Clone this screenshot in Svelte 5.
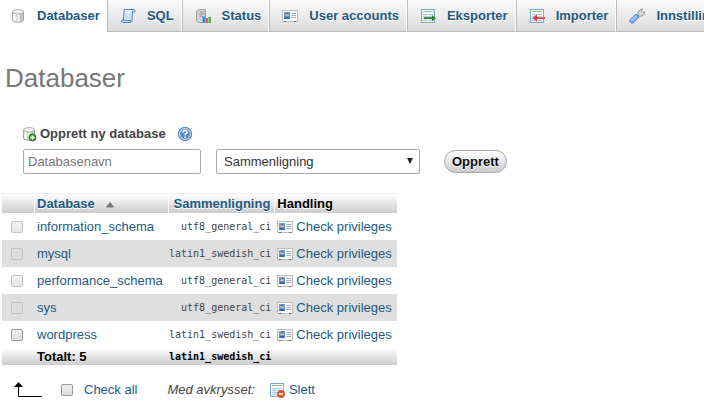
<script>
  const tabs = [
    { label: 'Databaser', icon: 'db', active: true },
    { label: 'SQL', icon: 'sql' },
    { label: 'Status', icon: 'status' },
    { label: 'User accounts', icon: 'rights' },
    { label: 'Eksporter', icon: 'export' },
    { label: 'Importer', icon: 'import' },
    { label: 'Innstillinger', icon: 'settings' }
  ];
  const databases = [
    { name: 'information_schema', collation: 'utf8_general_ci', system: true },
    { name: 'mysql', collation: 'latin1_swedish_ci', system: true },
    { name: 'performance_schema', collation: 'utf8_general_ci', system: true },
    { name: 'sys', collation: 'utf8_general_ci', system: true },
    { name: 'wordpress', collation: 'latin1_swedish_ci', system: false }
  ];
  let selected = $state([]);
  const selectable = databases.filter((d) => !d.system).map((d) => d.name);
  const toggleAll = (e) => (selected = e.currentTarget.checked ? [...selectable] : []);
</script>

{#snippet cylinder()}
  <path d="M2.5 3.8v8.400c0 1 2.400 2 5.500 2s5.500-1 5.500-2V3.800z" fill="#dadada" stroke="#a3a3a3" />
  <path d="M4.500 6v7" stroke="#fff" stroke-width="2" />
  <path d="M8.500 6v7.500" stroke="#efefef" stroke-width="2" />
  <path d="M11.500 6v7" stroke="#bdbdbd" stroke-width="2" />
  <ellipse cx="8" cy="3.800" rx="5.500" ry="2.200" fill="#f4f4f4" stroke="#b0b0b0" />
{/snippet}

{#snippet sheet()}
  <rect x="1.500" y="1.500" width="13" height="13" fill="#f6faff" stroke="#7da5da" />
  <path d="M3 3.500h10" stroke="#8ac878" />
  <path d="M3 6.500h10M3 8.500h10M3 10.500h10M3 12.500h10M5.500 6v7M10.500 6v7" stroke="#b3cae4" />
{/snippet}

{#snippet icon(kind)}
  <svg class="icon" viewBox="0 0 16 16" width="16" height="16" aria-hidden="true">
    {#if kind === 'db'}
      {@render cylinder()}
    {:else if kind === 'dbadd'}
      {@render cylinder()}
      <circle cx="11.500" cy="11.500" r="3.500" fill="#4c9a37" stroke="#2e7222" />
      <path d="M11.500 9.500v4M9.500 11.500h4" stroke="#fff" stroke-width="1.400" />
    {:else if kind === 'sql'}
      <path d="M4.500 1.500H14c1.500 0 1.500 2.500 0 2.500h-1.500l-.5 8.500c0 1.300-.5 2-1.500 2h-8c-1.500 0-1.800-2-.3-2.500H3.500L4 3c0-.8.200-1.300.500-1.500z" fill="#cfe1fa" stroke="#4f85ca" />
      <path d="M5 4.500h5.500M5 3h6.500" stroke="#fff" />
      <path d="M2.500 12.500h8v1.500M12.500 4V2.500" fill="none" stroke="#5d92d7" />
    {:else if kind === 'status'}
      <path d="M1.500 3L5 1.500h5.500v11L8 14.500H4L1.500 13z" fill="#d4d4d4" stroke="#a0a0a0" />
      <path d="M4.500 4h5M4.500 6h5M4.500 8h3" stroke="#999" />
      <path d="M7 8.500h3v6.500H7z" fill="#4385dc" />
      <path d="M10 10h3v5h-3z" fill="#e65a42" />
      <path d="M13 9h3v6h-3z" fill="#5bb454" />
      <path d="M7.500 9v6M10.500 10.500v4.500M13.500 9.500v5.500" stroke="#fff" stroke-opacity=".35" />
    {:else if kind === 'rights'}
      <rect x=".5" y="2.500" width="15" height="11" fill="#fafafa" stroke="#bdbdbd" />
      <path d="M2 4h6v7H2z" fill="#5a9fe8" />
      <path d="M2.500 11V9.500l1.500-1h2l1.500 1V11z" fill="#2f6ab0" />
      <circle cx="5" cy="6.900" r="1.600" fill="#e8b893" />
      <path d="M3.500 6.200q0-1.500 1.500-1.500t1.500 1.500z" fill="#8c5b40" />
      <path d="M9.500 5.500h4.500M9.500 7.500h4.500M9.500 9.500h4.500" stroke="#9fb0c6" />
      <path d="M2 13.500h2M12 13.500h2" stroke="#666" />
    {:else if kind === 'export'}
      {@render sheet()}
      <path d="M4 9.500h8V7l4 3.200-4 3.300V11H4z" fill="#388c30" />
      <path d="M4 10h10" stroke="#216b20" />
    {:else if kind === 'import'}
      {@render sheet()}
      <path d="M16 9H8V6.500L3.500 10 8 13.500V11h8z" fill="#ed343b" />
      <path d="M9 9.500h6" stroke="#ff8888" />
    {:else if kind === 'settings'}
      <path d="M9 7l.2-3L12 1.200l1.500-.2-1 2.500 1 1L16 3.800l-.3 2L13 8l-3 .200-1.500-1z" fill="#d8d8d8" stroke="#888" stroke-width=".9" />
      <path d="M7 6l3 3-5.500 5.800C2.500 16.200-.2 13.500 1.200 11.500z" fill="#78a9e9" stroke="#5a8dd0" />
      <path d="M7 8l-4.500 4.500" stroke="#b7d5fa" stroke-width="1.300" />
    {:else if kind === 'help'}
      <circle cx="8" cy="8" r="6.700" fill="#6e9fd2" stroke="#5c88bb" />
      <circle cx="8" cy="8" r="5.400" fill="#5a8dc6" stroke="#dce9f6" stroke-width=".9" />
      <path d="M6 6.500c0-2.600 4-2.600 4-.3C10 7.700 8 7.700 8 9.300M8 10.600v1.300" fill="none" stroke="#fff" stroke-width="1.500" />
    {:else if kind === 'drop'}
      {@render sheet()}
      <circle cx="12" cy="12" r="3.500" fill="#e65c2d" stroke="#c8481f" />
      <path d="M10 12h4" stroke="#fff" stroke-width="1.600" />
    {/if}
  </svg>
{/snippet}

<nav>
  {#each tabs as tab}
    <a href="#{tab.icon}" class:active={tab.active}>{@render icon(tab.icon)}{tab.label}</a>
  {/each}
</nav>

<main>
  <h1>Databaser</h1>

  <form class="create" onsubmit={(e) => e.preventDefault()}>
    <div class="caption">
      {@render icon('dbadd')}
      <label for="new-db">Opprett ny database</label>
      <a class="help" href="#help" aria-label="Dokumentasjon">{@render icon('help')}</a>
    </div>
    <div class="fields">
      <input id="new-db" type="text" placeholder="Databasenavn" />
      <div class="picker">
        <select aria-label="Sammenligning">
          <option>Sammenligning</option>
          <option>latin1_swedish_ci</option>
          <option>utf8_general_ci</option>
        </select>
        <svg class="caret" viewBox="0 0 6 6" width="6" height="6" aria-hidden="true"><path d="M0 0h6L3 6z" fill="#222" /></svg>
      </div>
      <button type="submit">Opprett</button>
    </div>
  </form>

  <table>
    <thead>
      <tr>
        <th class="tick"></th>
        <th class="name">
          <a href="#sort">Database<svg class="sort" viewBox="0 0 8 6" width="8" height="6" aria-hidden="true"><path d="M0 5L4 0l4 5z" fill="#777" /><path d="M0 5.500h8" stroke="#aaa" /></svg></a>
        </th>
        <th class="collation"><a href="#collation">Sammenligning</a></th>
        <th class="action">Handling</th>
      </tr>
    </thead>
    <tbody>
      {#each databases as db}
        <tr>
          <td class="tick"><input type="checkbox" aria-label={db.name} value={db.name} disabled={db.system} bind:group={selected} /></td>
          <td class="name"><a href="#{db.name}">{db.name}</a></td>
          <td class="collation"><code>{db.collation}</code></td>
          <td class="action"><a class="privileges" href="#privileges-{db.name}">{@render icon('rights')}Check privileges</a></td>
        </tr>
      {/each}
    </tbody>
    <tfoot>
      <tr>
        <th class="tick"></th>
        <th class="name">Totalt: {databases.length}</th>
        <th class="collation"><code>latin1_swedish_ci</code></th>
        <th class="action"></th>
      </tr>
    </tfoot>
  </table>

  <div class="bulk">
    <svg class="arrow" viewBox="0 0 28 16" width="28" height="16" aria-hidden="true">
      <path d="M4.500 3v11.500H28" fill="none" stroke="#000" />
      <path d="M0 5l4.500-5L9 5z" />
    </svg>
    <input id="all" type="checkbox" checked={selected.length === selectable.length} onchange={toggleAll} />
    <label for="all">Check all</label>
    <i>Med avkrysset:</i>
    <a href="#drop">{@render icon('drop')}Slett</a>
  </div>
</main>

<style>
  :global(body) {
    margin: 0;
    background: #fff;
    color: #444;
    font: 13px/16px "Liberation Sans", Arial, sans-serif;
    overflow-x: hidden;
  }
  a {
    color: #235a81;
    text-decoration: none;
  }
  .icon {
    flex: none;
  }
  nav {
    display: flex;
    overflow: hidden;
  }
  nav a {
    display: flex;
    flex: none;
    align-items: center;
    gap: 11px;
    box-sizing: border-box;
    height: 32px;
    padding: 0 7px 0 12px;
    border-left: 1px solid #bbb;
    border-right: 1px solid #fff;
    border-bottom: 1px solid #bbb;
    background: linear-gradient(#fafafa, #dcdcdc);
    font-weight: bold;
    text-shadow: 0 1px 0 #fff;
    white-space: nowrap;
  }
  nav a.active {
    padding: 0 6px 0 9px;
    border-color: #fff;
    background: #fff;
  }
  h1 {
    margin: 30px 5px 32px;
    color: #777;
    font-size: 26px;
    font-weight: normal;
    line-height: 32px;
  }
  .create {
    padding-left: 23px;
  }
  .caption {
    display: flex;
    align-items: center;
    gap: 3px;
    height: 16px;
    margin-left: -2px;
    font-weight: bold;
  }
  .help {
    display: flex;
    margin-left: 8px;
  }
  .fields {
    display: flex;
    align-items: center;
    margin-top: 7px;
  }
  .fields input,
  select {
    box-sizing: border-box;
    height: 25px;
    border: 1px solid #aaa;
    border-radius: 2px;
    background: #fff;
    color: #333;
    font: inherit;
  }
  .fields input {
    width: 178px;
    padding: 0 4px;
  }
  .fields input::placeholder {
    color: #777;
  }
  .picker {
    position: relative;
    margin: 0 24px 0 15px;
  }
  select {
    display: block;
    width: 204px;
    padding: 0 7px;
    appearance: none;
  }
  .caret {
    position: absolute;
    top: 9px;
    right: 7px;
    pointer-events: none;
  }
  button {
    height: 23px;
    padding: 0 7px;
    border: 1px solid #aaa;
    border-radius: 12px;
    background: linear-gradient(#fff, #ccc);
    color: #111;
    font: inherit;
    font-weight: bold;
    text-shadow: 0 1px 0 #fff;
  }
  table {
    margin: 19px 0 0 2px;
    border-collapse: separate;
    border-spacing: 0;
  }
  th,
  td {
    box-sizing: border-box;
    padding: 0;
    text-align: left;
    white-space: nowrap;
  }
  th {
    color: #000;
    background: linear-gradient(#fff, #ccc);
  }
  thead th {
    height: 20px;
    border-right: 1px solid #fff;
    border-top: 1px solid #eee;
    text-shadow: 0 1px 0 #fff;
  }
  thead th:last-child {
    border-right: 0;
  }
  tfoot th {
    height: 17px;
  }
  td {
    height: 27px;
  }
  tbody tr:nth-child(even) {
    background: #dfdfdf;
  }
  .tick {
    width: 33px;
    padding-left: 9px;
  }
  .name {
    width: 134px;
    padding-left: 2px;
  }
  .collation {
    width: 106px;
    padding-right: 4px;
    text-align: right;
  }
  .action {
    width: 122px;
    padding-left: 2px;
  }
  code {
    font-family: "DejaVu Sans Mono", monospace;
    font-size: 10px;
  }
  .sort {
    margin-left: 11px;
  }
  .privileges {
    display: flex;
    align-items: center;
    gap: 3px;
  }
  input[type="checkbox"] {
    display: block;
    box-sizing: border-box;
    width: 12px;
    height: 12px;
    margin: 0;
    border: 1px solid #999;
    border-radius: 2px;
    background: linear-gradient(#eee, #ddd);
    appearance: none;
  }
  input[type="checkbox"]:checked {
    background: #555;
  }
  input[type="checkbox"]:disabled {
    border-color: #c4c4c4;
    background: linear-gradient(#f1f1f1, #e6e6e6);
  }
  tbody tr:nth-child(even) input[type="checkbox"]:disabled {
    background: #dcdcdc;
  }
  .bulk {
    display: flex;
    align-items: center;
    margin: 17px 0 0 14px;
  }
  .bulk input {
    margin: 0 11px 0 19px;
  }
  .bulk label {
    color: #235a81;
  }
  .bulk i {
    margin: 0 14px 0 30px;
  }
  .bulk a {
    display: flex;
    align-items: center;
    gap: 4px;
  }
</style>
